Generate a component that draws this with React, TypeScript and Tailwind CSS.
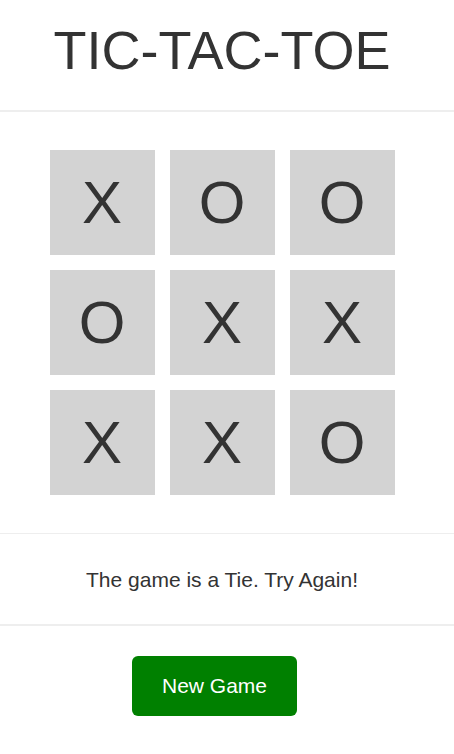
import React from "react";

const board = ["X", "O", "O", "O", "X", "X", "X", "X", "O"];

const App: React.FC = () => {
  return (
    <div className="min-h-screen bg-white text-[#333] font-['Liberation_Sans',Arial,sans-serif]">
      <header className="h-[112px] border-b-2 border-[#eee] flex items-center justify-center pr-[10px]">
        <h1 className="text-[54px] leading-none mt-[-10px]">TIC-TAC-TOE</h1>
      </header>

      <div className="pt-[38px] pb-[38px] border-b border-[#eee] flex justify-center pr-[10px]">
        <div className="grid grid-cols-[105px_105px_105px] gap-[15px]">
          {board.map((v, i) => (
            <div
              key={i}
              className="w-[105px] h-[105px] bg-[#d3d3d3] flex items-center justify-center text-[60px] leading-none"
            >
              {v}
            </div>
          ))}
        </div>
      </div>

      <div className="h-[92px] border-b-2 border-[#eee] flex items-center justify-center pr-[10px]">
        <p className="text-[21px] leading-none">The game is a Tie. Try Again!</p>
      </div>

      <div className="pt-[30px] flex justify-center pr-[25px]">
        <button className="w-[165px] h-[60px] bg-[#008000] text-white text-[21px] rounded-md">
          New Game
        </button>
      </div>
    </div>
  );
};

export default App;
